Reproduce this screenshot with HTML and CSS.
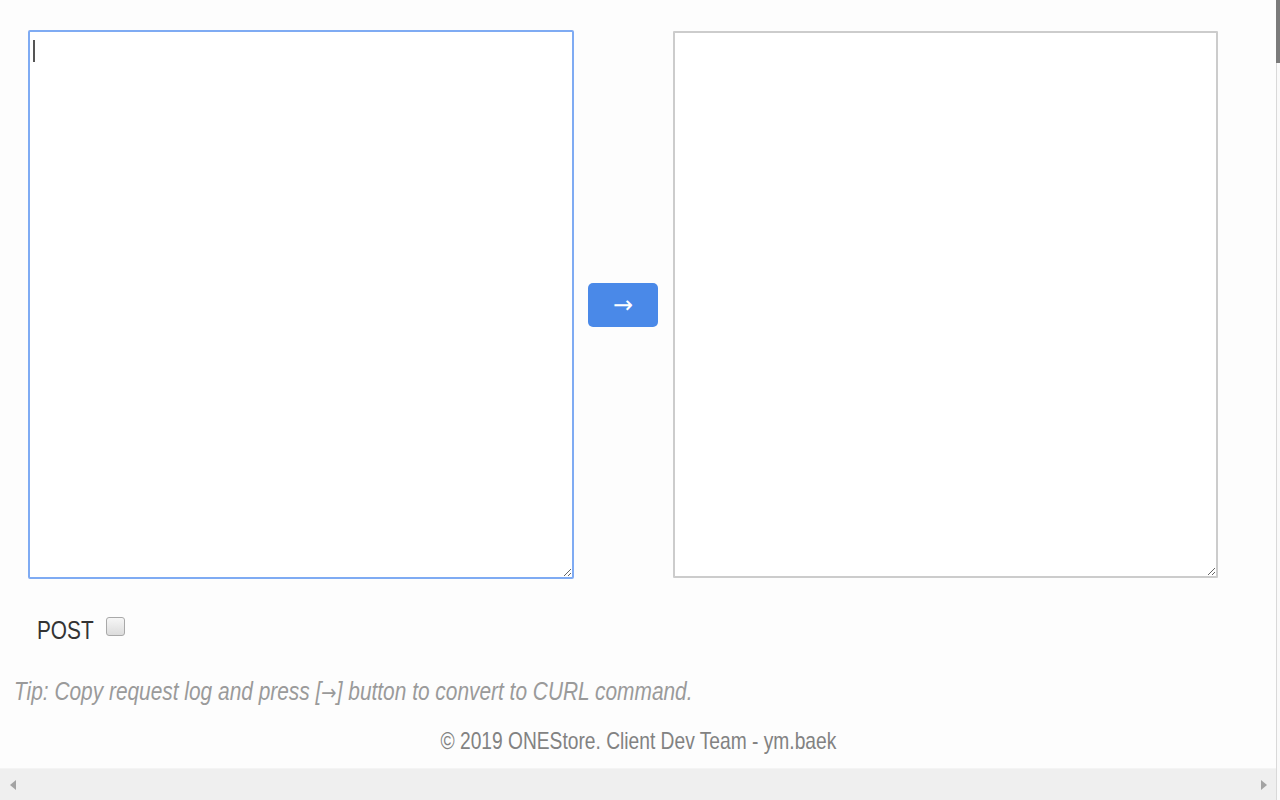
FILE: index.html
```html
<!DOCTYPE html>
<html lang="en">
<head>
<meta charset="utf-8">
<title>Request log to CURL</title>
<link rel="stylesheet" href="styles.css">
</head>
<body>
<div class="page">
  <main class="content">
    <section class="editor-row">
      <div class="input-wrap">
        <textarea class="box box-focused" spellcheck="false"></textarea>
        <span class="caret"></span>
      </div>
      <button class="convert" type="button">→</button>
      <textarea class="box box-plain" spellcheck="false"></textarea>
    </section>
    <label class="post-row">
      <span class="post-label">POST</span>
      <input type="checkbox" class="post-check">
    </label>
    <p class="tip"><span class="tip-text">Tip: Copy request log and press [<span class="tip-arrow">→</span>] button to convert to CURL command.</span></p>
    <footer class="footer"><span class="footer-text">© 2019 ONEStore. Client Dev Team - ym.baek</span></footer>
  </main>
  <div class="vscroll"><div class="vthumb"></div></div>
  <div class="hscroll">
    <span class="arrow arrow-left"></span>
    <span class="arrow arrow-right"></span>
  </div>
</div>
</body>
</html>
```

FILE: styles.css
```css
html, body {
  margin: 0;
  padding: 0;
  background: #fdfdfd;
}
body {
  font-family: "Liberation Sans", Arial, sans-serif;
  color: #333;
}
.page {
  width: 1280px;
  height: 800px;
  display: grid;
  grid-template-columns: 1276px 4px;
  grid-template-rows: 768px 32px;
  overflow: hidden;
}
.content {
  grid-column: 1;
  grid-row: 1;
  display: flex;
  flex-direction: column;
}
.editor-row {
  display: flex;
  align-items: center;
  padding: 30px 0 0 28px;
}
.input-wrap {
  position: relative;
  width: 546px;
  height: 549px;
}
.box {
  box-sizing: border-box;
  margin: 0;
  background: #fff;
  font-family: "Liberation Mono", monospace;
  font-size: 14px;
  outline: none;
}
.box-focused {
  width: 546px;
  height: 549px;
  border: 2px solid #7fabf3;
  border-radius: 2px;
}
.caret {
  position: absolute;
  left: 5px;
  top: 10px;
  width: 2px;
  height: 22px;
  background: #555;
}
.box-plain {
  width: 545px;
  height: 547px;
  border: 2px solid #cccccc;
  border-radius: 1px;
}
.convert {
  width: 70px;
  height: 44px;
  margin: 0 15px 0 14px;
  border: none;
  border-radius: 5px;
  background: #4a89e8;
  color: #fff;
  font-family: "DejaVu Sans", sans-serif;
  font-size: 24px;
  line-height: 44px;
  padding: 0;
}
.post-row {
  display: flex;
  align-items: center;
  margin: 36px 0 0 37px;
  height: 24px;
}
.post-label {
  display: inline-block;
  font-size: 26px;
  line-height: 24px;
  color: #333;
  padding-top: 5px;
  transform: scaleX(0.8);
  transform-origin: left center;
}
.post-check {
  appearance: none;
  -webkit-appearance: none;
  margin: -2px 0 0 -2px;
  width: 19px;
  height: 19px;
  box-sizing: border-box;
  border: 1px solid #a9a9a9;
  border-radius: 3px;
  background: linear-gradient(#f6f6f6, #dcdcdc);
}
.tip {
  margin: 38px 0 0 14px;
  font-size: 25px;
  font-style: italic;
  color: #9a9a9a;
  line-height: 28px;
}
.tip-text {
  display: inline-block;
  transform: scaleX(0.835);
  transform-origin: left center;
}
.tip-arrow {
  font-family: "DejaVu Sans", sans-serif;
  font-style: normal;
  font-size: 22px;
}
.footer {
  margin-top: 20px;
  text-align: center;
  font-size: 24px;
  color: #828282;
  line-height: 28px;
}
.footer-text {
  display: inline-block;
  transform: scaleX(0.8);
  transform-origin: center center;
}
.vscroll {
  grid-column: 2;
  grid-row: 1 / span 2;
  background: #fafafa;
  border-left: 1px solid #d9d9d9;
  box-sizing: border-box;
}
.vthumb {
  height: 63px;
  margin-left: -1px;
  background: #7b7b7b;
}
.hscroll {
  grid-column: 1;
  grid-row: 2;
  background: #efefef;
  border-top: 1px solid #f4f4f4;
  display: flex;
  align-items: center;
  justify-content: space-between;
  padding: 0 10px;
}
.arrow {
  width: 0;
  height: 0;
  border-top: 5px solid transparent;
  border-bottom: 5px solid transparent;
}
.arrow-left {
  border-right: 6px solid #a3a3a3;
}
.arrow-right {
  border-left: 6px solid #a3a3a3;
  margin-right: -1px;
}
```
